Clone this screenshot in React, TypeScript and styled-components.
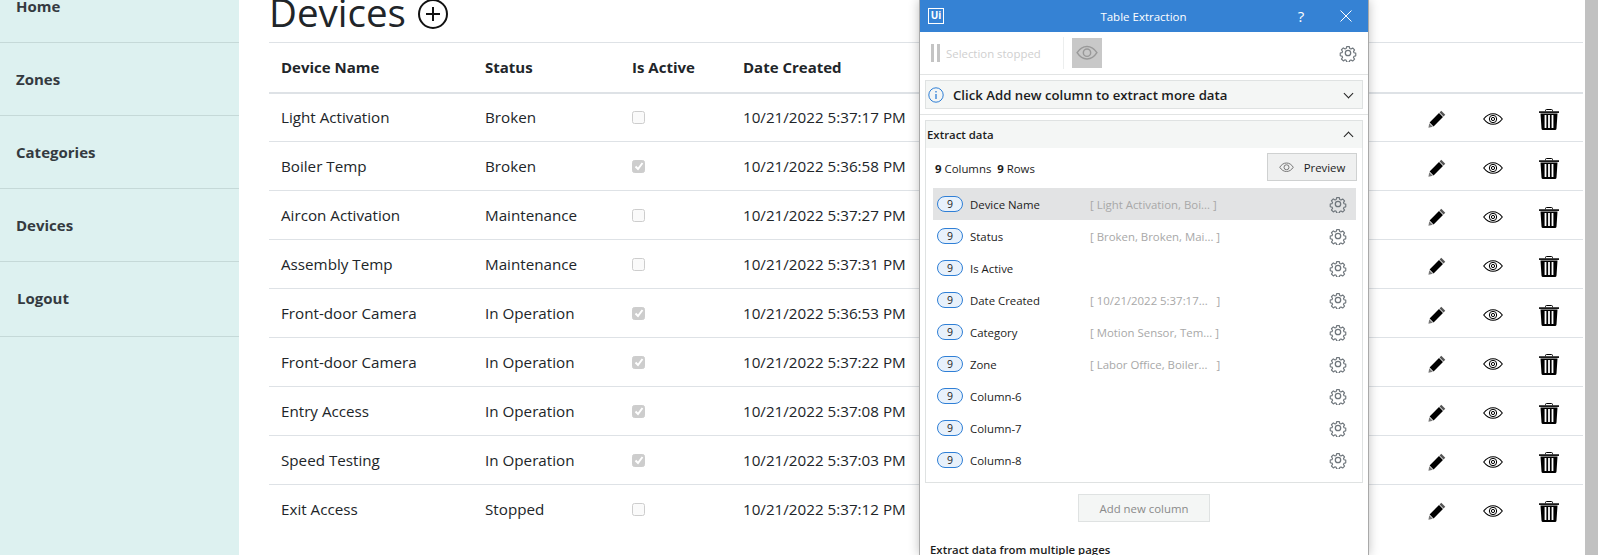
import React from 'react';
import styled, { createGlobalStyle } from 'styled-components';

const devices = [
  { name: 'Light Activation', status: 'Broken', active: false, created: '10/21/2022 5:37:17 PM' },
  { name: 'Boiler Temp', status: 'Broken', active: true, created: '10/21/2022 5:36:58 PM' },
  { name: 'Aircon Activation', status: 'Maintenance', active: false, created: '10/21/2022 5:37:27 PM' },
  { name: 'Assembly Temp', status: 'Maintenance', active: false, created: '10/21/2022 5:37:31 PM' },
  { name: 'Front-door Camera', status: 'In Operation', active: true, created: '10/21/2022 5:36:53 PM' },
  { name: 'Front-door Camera', status: 'In Operation', active: true, created: '10/21/2022 5:37:22 PM' },
  { name: 'Entry Access', status: 'In Operation', active: true, created: '10/21/2022 5:37:08 PM' },
  { name: 'Speed Testing', status: 'In Operation', active: true, created: '10/21/2022 5:37:03 PM' },
  { name: 'Exit Access', status: 'Stopped', active: false, created: '10/21/2022 5:37:12 PM' },
];

const columns = [
  { name: 'Device Name', sample: '[ Light Activation, Boi... ]' },
  { name: 'Status', sample: '[ Broken, Broken, Mai... ]' },
  { name: 'Is Active', sample: '' },
  { name: 'Date Created', sample: '[ 10/21/2022 5:37:17...   ]' },
  { name: 'Category', sample: '[ Motion Sensor, Tem... ]' },
  { name: 'Zone', sample: '[ Labor Office, Boiler...   ]' },
  { name: 'Column-6', sample: '' },
  { name: 'Column-7', sample: '' },
  { name: 'Column-8', sample: '' },
];

const navItems = ['Home', 'Zones', 'Categories', 'Devices', 'Logout'];

const GearIcon = ({ size = 18 }: { size?: number }) => (
  <svg width={size} height={size} viewBox="0 0 24 24" fill="none" stroke="#6f767c" strokeWidth="1.7" strokeLinejoin="round">
    <path d="M10 2.5h4l.6 2.9 1.8.8 2.5-1.6 2.8 2.8-1.6 2.5.8 1.8 2.6.5v4l-2.6.6-.8 1.8 1.6 2.5-2.8 2.8-2.5-1.6-1.8.8-.6 2.4h-4l-.6-2.6-1.8-.8-2.5 1.6-2.8-2.8 1.6-2.5-.8-1.8-2.6-.6v-4l2.6-.5.8-1.8-1.6-2.5 2.8-2.8 2.5 1.6 1.8-.8z" transform="translate(1.2 1.2) scale(.9)" />
    <circle cx="12" cy="12" r="3.6" />
  </svg>
);

const EyeOutline = ({ width, color }: { width: number; color: string }) => (
  <svg width={width} height={width * 0.7} viewBox="0 0 30 21" fill="none" stroke={color} strokeWidth="2">
    <path d="M1.5 10.5C5 5 9.500 2 15 2s10 3 13.500 8.500C25 16 20.500 19 15 19S5 16 1.500 10.500z" />
    <circle cx="15" cy="10.500" r="5" />
  </svg>
);

const PencilIcon = () => (
  <svg width="18" height="18" viewBox="0 0 19 19">
    <path d="M14 .8l4.200 4.200-1.800 1.800-4.200-4.200z" fill="#555" />
    <path d="M11.600 3.200l4.200 4.200-9.900 9.900-4.200-4.200z" fill="#000" />
    <path d="M1.300 13.900l3.800 3.800-4.600 1z" fill="#777" />
  </svg>
);

const ActionEye = () => (
  <svg width="20" height="12" viewBox="0 0 20 12" fill="none" stroke="#000">
    <path d="M.7 6C3.400 2.500 6.400.7 10 .7s6.600 1.800 9.300 5.300c-2.700 3.500-5.700 5.300-9.300 5.300S3.400 9.500.7 6z" strokeWidth="1.100" />
    <circle cx="10" cy="6" r="3.700" strokeWidth="1" />
    <circle cx="10" cy="6" r="1.600" strokeWidth="1" />
  </svg>
);

const TrashIcon = () => (
  <svg width="20" height="21" viewBox="0 0 20 21">
    <path d="M6.500 2.300V1.500Q6.500.5 7.500.5h5q1 0 1 1v.8" fill="none" stroke="#000" strokeWidth="1" />
    <rect x="0" y="2.300" width="20" height="1.600" fill="#000" />
    <path d="M1.500 4.500h17l-1 15q-.1 1.500-1.500 1.500H4q-1.400 0-1.500-1.500z" fill="#000" />
    <rect x="5.600" y="6" width="1.800" height="13" fill="#fff" />
    <rect x="9.100" y="6" width="1.800" height="13" fill="#fff" />
    <rect x="12.600" y="6" width="1.800" height="13" fill="#fff" />
  </svg>
);

const App = () => (
  <>
    <GlobalStyle />
    <Page>
      <Sidebar>
        {navItems.map((item, i) => (
          <NavItem key={item} $first={i === 0} $last={i === navItems.length - 1}>
            {item}
          </NavItem>
        ))}
      </Sidebar>
      <Main>
        <Heading>
          Devices
          <PlusIcon width="30" height="30" viewBox="0 0 30 30" fill="none" stroke="#111" strokeWidth="2">
            <circle cx="15" cy="15" r="14" />
            <path d="M15 8v14M8 15h14" />
          </PlusIcon>
        </Heading>
        <Table>
          <colgroup>
            <Col $width={204} />
            <Col $width={147} />
            <Col $width={111} />
            <Col />
            <Col $width={56} />
            <Col $width={56} />
            <Col $width={56} />
            <Col $width={6} />
          </colgroup>
          <thead>
            <tr>
              <HeadCell>Device Name</HeadCell>
              <HeadCell>Status</HeadCell>
              <HeadCell>Is Active</HeadCell>
              <HeadCell>Date Created</HeadCell>
              <HeadCell />
              <HeadCell />
              <HeadCell />
              <HeadCell />
            </tr>
          </thead>
          <tbody>
            {devices.map((d) => (
              <Row key={d.created}>
                <Cell>{d.name}</Cell>
                <Cell>{d.status}</Cell>
                <Cell>
                  <CheckBox $checked={d.active}>
                    {d.active && (
                      <svg width="10" height="10" viewBox="0 0 10 10" fill="none" stroke="#fff" strokeWidth="2">
                        <path d="M1.500 5.500l2.500 2.500 4.500-6" />
                      </svg>
                    )}
                  </CheckBox>
                </Cell>
                <Cell>{d.created}</Cell>
                <IconCell><PencilIcon /></IconCell>
                <IconCell><ActionEye /></IconCell>
                <IconCell><TrashIcon /></IconCell>
                <IconCell />
              </Row>
            ))}
          </tbody>
        </Table>
      </Main>
      <Scrollbar />

      <Panel>
        <TitleBar>
          <Logo>Ui</Logo>
          <TitleText>Table Extraction</TitleText>
          <TitleAction $width={46}>?</TitleAction>
          <TitleAction $width={44}>
            <svg width="12" height="12" viewBox="0 0 12 12" stroke="#fff" strokeWidth="1">
              <path d="M.5.500l11 11M11.500.500l-11 11" />
            </svg>
          </TitleAction>
        </TitleBar>
        <Toolbar>
          <PauseBars />
          <StoppedText>Selection stopped</StoppedText>
          <ToolDivider />
          <EyeToggle><EyeOutline width={22} color="#999" /></EyeToggle>
          <ToolGear><GearIcon /></ToolGear>
        </Toolbar>
        <InfoBar>
          <svg width="16" height="16" viewBox="0 0 16 16" fill="none" stroke="#2f7fd6" strokeWidth="1">
            <circle cx="8" cy="8" r="7.200" />
            <path d="M8 7v5M8 4v1.500" strokeWidth="1.300" />
          </svg>
          <InfoText>Click Add new column to extract more data</InfoText>
          <Chevron />
        </InfoBar>
        <PanelRule />
        <Section>
          <SectionHead>
            Extract data
            <Chevron $up />
          </SectionHead>
          <SummaryRow>
            <Summary><b>9</b> Columns&nbsp;&nbsp;<b>9</b> Rows</Summary>
            <PreviewButton>
              <EyeOutline width={15} color="#777" />
              Preview
            </PreviewButton>
          </SummaryRow>
          {columns.map((c, i) => (
            <ColumnRow key={c.name} $selected={i === 0}>
              <CountPill>9</CountPill>
              <ColumnName>{c.name}</ColumnName>
              <ColumnSample>{c.sample}</ColumnSample>
              <GearIcon />
            </ColumnRow>
          ))}
        </Section>
        <AddColumnButton>Add new column</AddColumnButton>
        <MultiPage>Extract data from multiple pages</MultiPage>
      </Panel>
    </Page>
  </>
);

export default App;

const GlobalStyle = createGlobalStyle`
  html, body {
    margin: 0;
    height: 555px;
    overflow: hidden;
    background: #fff;
  }
  body {
    font-family: "Open Sans", "Liberation Sans", sans-serif;
    color: #212529;
  }
`;

const Page = styled.div`
  position: relative;
  display: flex;
  width: 1600px;
  height: 555px;
  overflow: hidden;
`;

const Sidebar = styled.nav`
  width: 239px;
  flex-shrink: 0;
  background: #ddf1f0;
  display: flex;
  flex-direction: column;
`;

const NavItem = styled.div<{ $first?: boolean; $last?: boolean }>`
  height: ${(p) => (p.$first ? '47px' : p.$last ? '75px' : '73px')};
  margin-top: ${(p) => (p.$first ? '-4px' : '0')};
  padding: ${(p) => (p.$first ? '0' : '26px')} 16px 0 ${(p) => (p.$last ? '17px' : '16px')};
  box-sizing: border-box;
  border-bottom: 1px solid #c5d9d8;
  font-size: 15px;
  line-height: 20px;
  font-weight: 700;
  color: #343a40;
`;

const Main = styled.main`
  width: 1314px;
  margin-left: 30px;
  flex-shrink: 0;
`;

const Heading = styled.h1`
  margin: -18px 0 0;
  height: 60px;
  display: flex;
  align-items: center;
  gap: 12px;
  font-size: 38.500px;
  line-height: 50px;
  font-weight: 400;
  color: #212529;
`;

const PlusIcon = styled.svg`
  margin-top: 4px;
`;

const Table = styled.table`
  width: 100%;
  table-layout: fixed;
  border-collapse: collapse;
  font-size: 15.200px;
  color: #212529;
`;

const Col = styled.col<{ $width?: number }>`
  width: ${(p) => (p.$width ? `${p.$width}px` : 'auto')};
`;

const HeadCell = styled.th`
  height: 50px;
  padding: 0 12px;
  box-sizing: border-box;
  text-align: left;
  font-size: 15px;
  font-weight: 700;
  border-top: 1px solid #dee2e6;
  border-bottom: 2px solid #dee2e6;
`;

const Row = styled.tr`
  &:not(:last-child) td {
    border-bottom: 1px solid #dee2e6;
  }
`;

const Cell = styled.td`
  height: 49px;
  padding: 0 12px;
  box-sizing: border-box;
`;

const IconCell = styled(Cell)`
  padding: 4px 0 0;

  svg {
    display: block;
    margin: 0 auto;
  }
`;

const CheckBox = styled.span<{ $checked: boolean }>`
  display: flex;
  align-items: center;
  justify-content: center;
  width: 13px;
  height: 13px;
  box-sizing: border-box;
  border-radius: 2.500px;
  border: 1px solid #cdcdcd;
  background: ${(p) => (p.$checked ? '#cdcdcd' : '#fafafa')};
`;

const Scrollbar = styled.div`
  position: absolute;
  top: 0;
  right: 2px;
  width: 13px;
  height: 555px;
  background: #c1c1c1;
`;

const Panel = styled.aside`
  position: absolute;
  top: 0;
  left: 919px;
  width: 450px;
  height: 555px;
  box-sizing: border-box;
  background: #fff;
  border-left: 1px solid #a9a9a9;
  border-right: 1px solid #a9a9a9;
  box-shadow: 0 0 10px rgba(0, 0, 0, 0.25);
  font-family: "Open Sans", "Liberation Sans", sans-serif;
  font-size: 11.400px;
  color: #1c1c1c;
`;

const TitleBar = styled.div`
  height: 32px;
  display: flex;
  align-items: center;
  padding-left: 8px;
  background: #3582d4;
  color: #fff;
  font-size: 11.500px;
`;

const Logo = styled.div`
  width: 16px;
  height: 16px;
  box-sizing: border-box;
  border: 1.500px solid #fff;
  color: #fff;
  font-size: 10px;
  font-weight: 700;
  line-height: 13px;
  text-align: center;
`;

const TitleText = styled.div`
  flex: 1;
  text-align: center;
  padding-left: 65px;
`;

const TitleAction = styled.div<{ $width: number }>`
  width: ${(p) => p.$width}px;
  display: flex;
  justify-content: center;
  font-size: 15px;
`;

const Toolbar = styled.div`
  height: 43px;
  box-sizing: border-box;
  display: flex;
  align-items: center;
  padding-left: 11px;
  border-bottom: 1px solid #e2e4e4;
`;

const PauseBars = styled.div`
  width: 9px;
  height: 18px;
  box-sizing: border-box;
  border-left: 3px solid #c4c4c4;
  border-right: 3px solid #c4c4c4;
`;

const StoppedText = styled.div`
  margin-left: 6px;
  width: 117px;
  font-size: 11.400px;
  color: #cfcfcf;
`;

const ToolDivider = styled.div`
  width: 1px;
  height: 32px;
  background: #eceeee;
`;

const EyeToggle = styled.div`
  width: 30px;
  height: 30px;
  margin-left: 8px;
  display: flex;
  align-items: center;
  justify-content: center;
  background: #c8c8c8;
`;

const ToolGear = styled.div`
  margin-left: auto;
  margin-right: 11px;
  display: flex;
`;

const InfoBar = styled.div`
  height: 29px;
  margin: 5px 5px 0;
  box-sizing: border-box;
  display: flex;
  align-items: center;
  padding: 0 9px 0 2px;
  background: #f4f6f5;
  border: 1px solid #dfe2e2;
`;

const InfoText = styled.div`
  flex: 1;
  margin-left: 9px;
  font-size: 13.200px;
  font-weight: 600;
`;

const Chevron = styled.span<{ $up?: boolean }>`
  width: 6px;
  height: 6px;
  margin-top: ${(p) => (p.$up ? '4px' : '-3px')};
  margin-right: 1px;
  border-right: 1.300px solid #222;
  border-bottom: 1.300px solid #222;
  transform: rotate(${(p) => (p.$up ? '-135deg' : '45deg')});
`;

const PanelRule = styled.div`
  height: 1px;
  margin-top: 5px;
  background: #e2e4e4;
`;

const Section = styled.section`
  height: 363px;
  margin: 5px 5px 0;
  box-sizing: border-box;
  border: 1px solid #dfe2e2;
`;

const SectionHead = styled.div`
  height: 27px;
  display: flex;
  align-items: center;
  justify-content: space-between;
  padding: 0 9px 0 1px;
  background: #f4f6f5;
  font-weight: 600;
`;

const SummaryRow = styled.div`
  height: 40px;
  display: flex;
  align-items: center;
  justify-content: space-between;
  padding: 0 5px 0 9px;
`;

const Summary = styled.div`
  b {
    font-weight: 700;
  }
`;

const PreviewButton = styled.div`
  width: 90px;
  height: 28px;
  margin-top: -2px;
  box-sizing: border-box;
  display: flex;
  align-items: center;
  justify-content: center;
  gap: 10px;
  background: #eff0f0;
  border: 1px solid #cfd1d1;
`;

const ColumnRow = styled.div<{ $selected?: boolean }>`
  height: 32px;
  margin: 0 6px 0 7px;
  padding: 0 9px 0 4px;
  display: flex;
  align-items: center;
  background: ${(p) => (p.$selected ? '#e2e3e4' : 'transparent')};
`;

const CountPill = styled.div`
  width: 26px;
  height: 16px;
  box-sizing: border-box;
  border: 1px solid #2f7fd6;
  border-radius: 8px;
  background: #e8f1fb;
  font-size: 10.500px;
  line-height: 14px;
  text-align: center;
`;

const ColumnName = styled.div`
  width: 120px;
  margin-left: 7px;
`;

const ColumnSample = styled.div`
  flex: 1;
  color: #a8a8a8;
  white-space: pre;
`;

const AddColumnButton = styled.div`
  width: 132px;
  height: 28px;
  margin: 11px auto 0;
  box-sizing: border-box;
  display: flex;
  align-items: center;
  justify-content: center;
  background: #f4f6f5;
  border: 1px solid #dfe2e2;
  color: #8a8a8a;
`;

const MultiPage = styled.div`
  margin: 20px 0 0 10px;
  font-weight: 600;
`;
